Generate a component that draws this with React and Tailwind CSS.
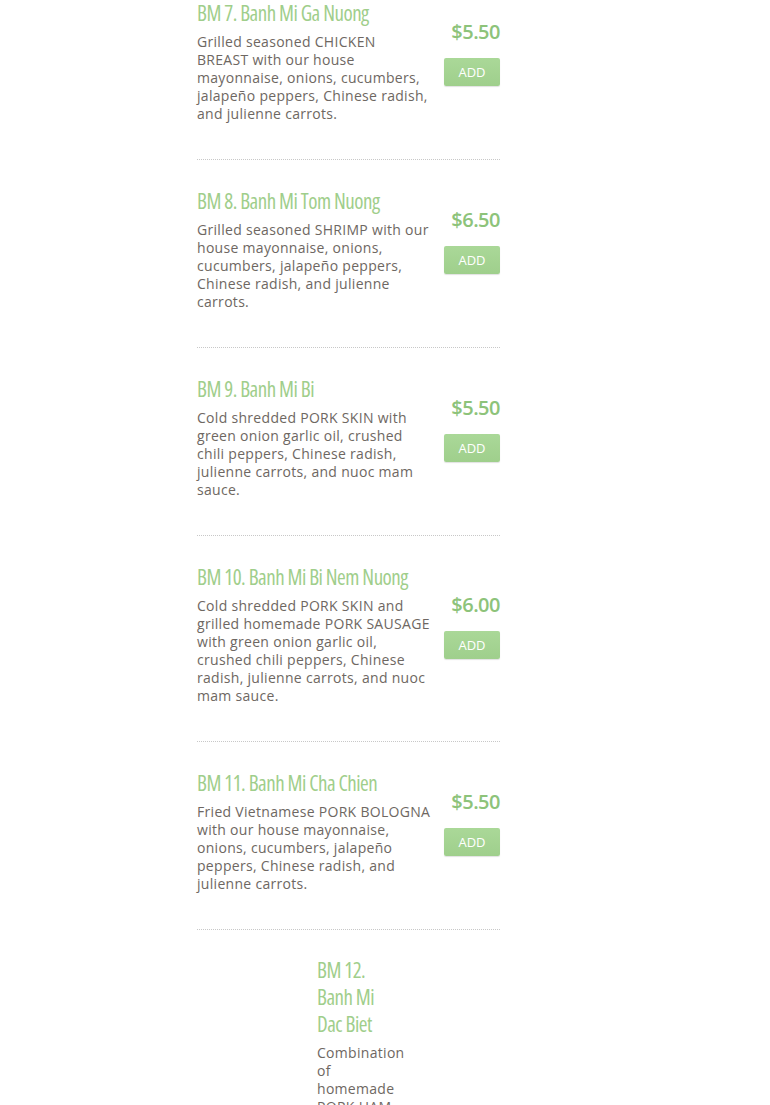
const items = [
  {
    name: "BM 7. Banh Mi Ga Nuong",
    desc: "Grilled seasoned CHICKEN BREAST with our house mayonnaise, onions, cucumbers, jalapeño peppers, Chinese radish, and julienne carrots.",
    price: "$5.50",
  },
  {
    name: "BM 8. Banh Mi Tom Nuong",
    desc: "Grilled seasoned SHRIMP with our house mayonnaise, onions, cucumbers, jalapeño peppers, Chinese radish, and julienne carrots.",
    price: "$6.50",
  },
  {
    name: "BM 9. Banh Mi Bi",
    desc: "Cold shredded PORK SKIN with green onion garlic oil, crushed chili peppers, Chinese radish, julienne carrots, and nuoc mam sauce.",
    price: "$5.50",
  },
  {
    name: "BM 10. Banh Mi Bi Nem Nuong",
    desc: "Cold shredded PORK SKIN and grilled homemade PORK SAUSAGE with green onion garlic oil, crushed chili peppers, Chinese radish, julienne carrots, and nuoc mam sauce.",
    price: "$6.00",
    low: true,
  },
  {
    name: "BM 11. Banh Mi Cha Chien",
    desc: "Fried Vietnamese PORK BOLOGNA with our house mayonnaise, onions, cucumbers, jalapeño peppers, Chinese radish, and julienne carrots.",
    price: "$5.50",
  },
];

const MenuItem = ({ item }) => (
  <div className="border-b border-dotted border-[#c8c8c8] pb-[36px] pt-[28px] first:pt-0">
    <div className="flex">
      <div className="w-[234px]">
        <h3 className="text-[21px] leading-[27px] font-normal text-[#9fce8b] tracking-[-0.5px] [font-stretch:condensed]">
          {item.name}
        </h3>
        <p className="mt-[6px] text-[14px] leading-[18px] text-[#6e6762] tracking-[0.3px]">
          {item.desc}
        </p>
      </div>
      <div
        className={`ml-auto flex flex-col items-end ${
          item.low ? "pt-[27px]" : "pt-[18px]"
        }`}
      >
        <div className="text-[20px] leading-[28px] font-semibold text-[#8dc37a] tracking-[-0.5px]">
          {item.price}
        </div>
        <button className="mt-[12px] w-[56px] h-[28px] rounded-[2px] bg-gradient-to-b from-[#aad898] to-[#9fcf8c] text-white text-[13px] leading-[28px] shadow-[0_1px_1px_rgba(0,0,0,0.12)]">
          ADD
        </button>
      </div>
    </div>
  </div>
);

export default function App() {
  return (
    <div
      className="h-[1105px] overflow-hidden bg-white"
      style={{ fontFamily: '"Open Sans", sans-serif' }}
    >
      <div className="ml-[197px] w-[303px]">
        {items.map((item) => (
          <MenuItem key={item.name} item={item} />
        ))}
        <div className="pt-[27px] flex">
          <div className="w-[120px] shrink-0" />
          <div className="w-[88px]">
            <h3 className="max-w-[72px] text-[21px] leading-[27px] font-normal text-[#9fce8b] tracking-[-0.5px] [font-stretch:condensed]">
              BM 12. Banh Mi Dac Biet
            </h3>
            <p className="mt-[6px] text-[14px] leading-[18px] text-[#6e6762] tracking-[0.3px]">
              Combination of homemade PORK HAM, PORK BOLOGNA, and PORK PATE
              with our house mayonnaise.
            </p>
          </div>
        </div>
      </div>
    </div>
  );
}
